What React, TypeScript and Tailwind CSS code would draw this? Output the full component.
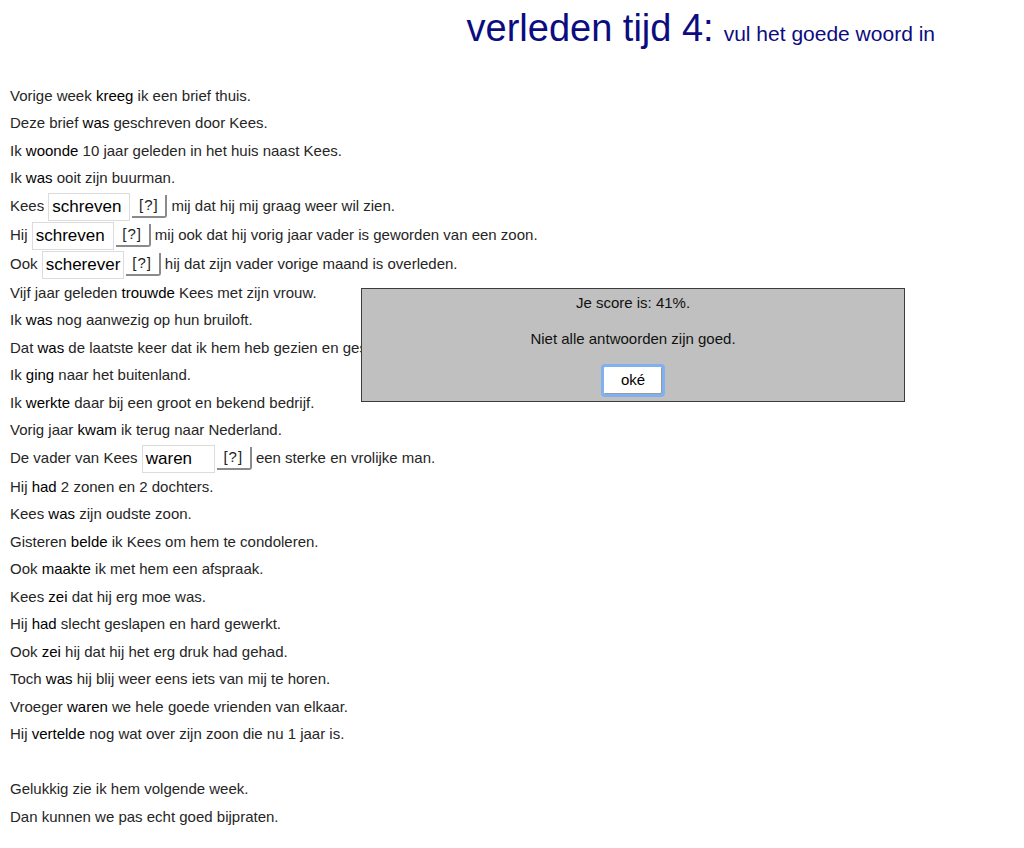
import React from "react";

type Seg = string | { v: string } | { input: string; w: number };

const lines: (Seg[] | null)[] = [
  ["Vorige week ", { v: "kreeg" }, " ik een brief thuis."],
  ["Deze brief ", { v: "was" }, " geschreven door Kees."],
  ["Ik ", { v: "woonde" }, " 10 jaar geleden in het huis naast Kees."],
  ["Ik ", { v: "was" }, " ooit zijn buurman."],
  ["Kees ", { input: "schreven", w: 82 }, " mij dat hij mij graag weer wil zien."],
  ["Hij ", { input: "schreven", w: 82 }, " mij ook dat hij vorig jaar vader is geworden van een zoon."],
  ["Ook ", { input: "scherever", w: 82 }, " hij dat zijn vader vorige maand is overleden."],
  ["Vijf jaar geleden ", { v: "trouwde" }, " Kees met zijn vrouw."],
  ["Ik ", { v: "was" }, " nog aanwezig op hun bruiloft."],
  ["Dat ", { v: "was" }, " de laatste keer dat ik hem heb gezien en gesproken."],
  ["Ik ", { v: "ging" }, " naar het buitenland."],
  ["Ik ", { v: "werkte" }, " daar bij een groot en bekend bedrijf."],
  ["Vorig jaar ", { v: "kwam" }, " ik terug naar Nederland."],
  ["De vader van Kees ", { input: "waren", w: 73 }, " een sterke en vrolijke man."],
  ["Hij ", { v: "had" }, " 2 zonen en 2 dochters."],
  ["Kees ", { v: "was" }, " zijn oudste zoon."],
  ["Gisteren ", { v: "belde" }, " ik Kees om hem te condoleren."],
  ["Ook ", { v: "maakte" }, " ik met hem een afspraak."],
  ["Kees ", { v: "zei" }, " dat hij erg moe was."],
  ["Hij ", { v: "had" }, " slecht geslapen en hard gewerkt."],
  ["Ook ", { v: "zei" }, " hij dat hij het erg druk had gehad."],
  ["Toch ", { v: "was" }, " hij blij weer eens iets van mij te horen."],
  ["Vroeger ", { v: "waren" }, " we hele goede vrienden van elkaar."],
  ["Hij ", { v: "vertelde" }, " nog wat over zijn zoon die nu 1 jaar is."],
  null,
  ["Gelukkig zie ik hem volgende week."],
  ["Dan kunnen we pas echt goed bijpraten."],
];

function Gap({ value, w }: { value: string; w: number }) {
  return (
    <span className="inline-flex items-center">
      <span
        className="inline-flex items-center h-[28px] border border-[#dcdcdc] bg-white pl-[3px] text-[17px] text-black"
        style={{ width: w }}
      >
        {value}
      </span>
      <span className="ml-[2px] inline-flex items-center justify-center h-[23px] w-[35px] rounded-br-[3px] border-r-2 border-b-2 border-[#8a8a8a] bg-white text-[15px] tracking-[1px] text-[#222]">
        [?]
      </span>
    </span>
  );
}

export default function App() {
  return (
    <div
      className="relative min-h-[848px] w-[1024px] bg-white text-[15px] text-[#262626]"
      style={{ fontFamily: '"Liberation Sans", Arial, sans-serif' }}
    >
      <header className="flex justify-end items-baseline pr-[89px] pt-0 h-[82px] text-[#0c0c80]">
        <span className="text-[38px]">verleden tijd 4:</span>
        <span className="ml-[10px] text-[21px]">vul het goede woord in</span>
      </header>

      <main className="pl-[10px]">
        {lines.map((line, i) => {
          if (line === null) return <div key={i} className="h-[27.5px]" />;
          const hasGap = line.some((s) => typeof s !== "string" && "input" in s);
          return (
            <div
              key={i}
              className={`flex items-center whitespace-pre ${hasGap ? "h-[29px]" : "h-[27.5px]"}`}
            >
              {line.map((s, j) =>
                typeof s === "string" ? (
                  <span key={j}>{s}</span>
                ) : "v" in s ? (
                  <span key={j} className="text-black">
                    {s.v}
                  </span>
                ) : (
                  <Gap key={j} value={s.input} w={s.w} />
                )
              )}
            </div>
          );
        })}
      </main>

      {/* result dialog over the text */}
      <div className="absolute left-[361px] top-[288px] w-[544px] h-[114px] border border-[#3c3c3c] bg-[#c0c0c0] flex flex-col items-center text-[15px] text-[#111]">
        <div className="mt-[3px]">Je score is: 41%.</div>
        <div className="mt-[13px]">Niet alle antwoorden zijn goed.</div>
        <button className="mt-[14px] h-[33px] w-[64px] rounded-[4px] border-[3px] border-[#7fb0f0] bg-white text-[15px] text-black shadow-[inset_-1px_-1px_0_#9a9a9a]">
          oké
        </button>
      </div>
    </div>
  );
}
